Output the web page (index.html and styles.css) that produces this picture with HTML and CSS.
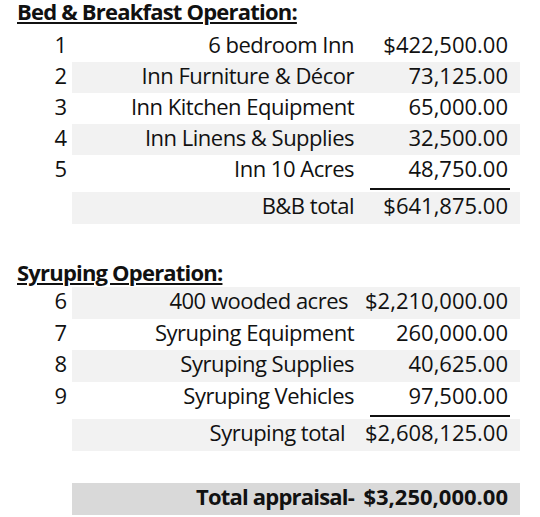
FILE: index.html
```html
<!DOCTYPE html>
<html lang="en">
<head>
<meta charset="utf-8">
<title>Appraisal</title>
<link rel="stylesheet" href="styles.css">
</head>
<body>
<div class="sheet">
  <div class="heading heading--first"><span class="heading-text">Bed &amp; Breakfast Operation:</span></div>
  <div class="row"><div class="num">1</div><div class="band"><div class="label">6 bedroom Inn</div><div class="value">$422,500.00</div></div></div>
  <div class="row"><div class="num">2</div><div class="band band--shade"><div class="label">Inn Furniture &amp; Décor</div><div class="value">73,125.00</div></div></div>
  <div class="row"><div class="num">3</div><div class="band"><div class="label">Inn Kitchen Equipment</div><div class="value">65,000.00</div></div></div>
  <div class="row"><div class="num">4</div><div class="band band--shade"><div class="label">Inn Linens &amp; Supplies</div><div class="value">32,500.00</div></div></div>
  <div class="row row--sum"><div class="num">5</div><div class="band"><div class="label">Inn 10 Acres</div><div class="value value--line">48,750.00</div></div></div>
  <div class="row row--total"><div class="num"></div><div class="band band--shade"><div class="label">B&amp;B total</div><div class="value">$641,875.00</div></div></div>
  <div class="spacer"></div>
  <div class="heading heading--second"><span class="heading-text">Syruping Operation:</span></div>
  <div class="row row--tall"><div class="num">6</div><div class="band band--shade"><div class="label label--wide">400 wooded acres</div><div class="value">$2,210,000.00</div></div></div>
  <div class="row"><div class="num">7</div><div class="band"><div class="label">Syruping Equipment</div><div class="value">260,000.00</div></div></div>
  <div class="row row--tall"><div class="num">8</div><div class="band band--shade"><div class="label">Syruping Supplies</div><div class="value">40,625.00</div></div></div>
  <div class="row row--sum"><div class="num">9</div><div class="band"><div class="label">Syruping Vehicles</div><div class="value value--line">97,500.00</div></div></div>
  <div class="row row--total"><div class="num"></div><div class="band band--shade"><div class="label label--wider">Syruping total</div><div class="value">$2,608,125.00</div></div></div>
  <div class="spacer spacer--second"></div>
  <div class="row row--total"><div class="num"></div><div class="band band--dark"><div class="label">Total appraisal-</div><div class="value">$3,250,000.00</div></div></div>
</div>
</body>
</html>
```

FILE: styles.css
```css
html, body {
  margin: 0;
  padding: 0;
  background: #ffffff;
}

.sheet {
  width: 540px;
  font-family: "Open Sans", "Noto Sans", sans-serif;
  font-size: 22px;
  color: #111111;
  display: flex;
  flex-direction: column;
}

.heading {
  height: 31px;
  padding-left: 17px;
  font-weight: 700;
  letter-spacing: -0.8px;
  white-space: nowrap;
}

.heading--first {
  line-height: 22px;
}

.heading--second {
  height: 32px;
  line-height: 35px;
}

.heading-text {
  text-decoration: underline;
  text-decoration-thickness: 2px;
  text-underline-offset: 2px;
}

.row {
  display: flex;
  height: 31px;
  line-height: 27px;
  white-space: nowrap;
}

.row--tall {
  height: 32px;
}

.row--sum {
  height: 37px;
}

.row--total {
  height: 32px;
}

.num {
  width: 72px;
  box-sizing: border-box;
  padding-right: 5px;
  text-align: right;
}

.band {
  width: 448px;
  box-sizing: border-box;
  padding-right: 10px;
  display: flex;
}

.band--shade {
  background: #f2f2f2;
}

.band--dark {
  background: #d9d9d9;
  font-weight: 700;
}

.label {
  flex: 1;
  display: flex;
  justify-content: flex-end;
  padding-right: 16px;
  letter-spacing: -0.5px;
}

.band--dark .label {
  letter-spacing: -0.8px;
}

.label--wide {
  padding-right: 22px;
}

.label--wider {
  padding-right: 25px;
}

.value {
  width: 140px;
  flex: none;
  display: flex;
  justify-content: flex-end;
  padding-right: 2px;
  box-sizing: border-box;
}

.value--line {
  height: 35px;
  border-bottom: 2px solid #111111;
  box-sizing: border-box;
}

.spacer {
  height: 31px;
}

.spacer--second {
  height: 32px;
}
```
